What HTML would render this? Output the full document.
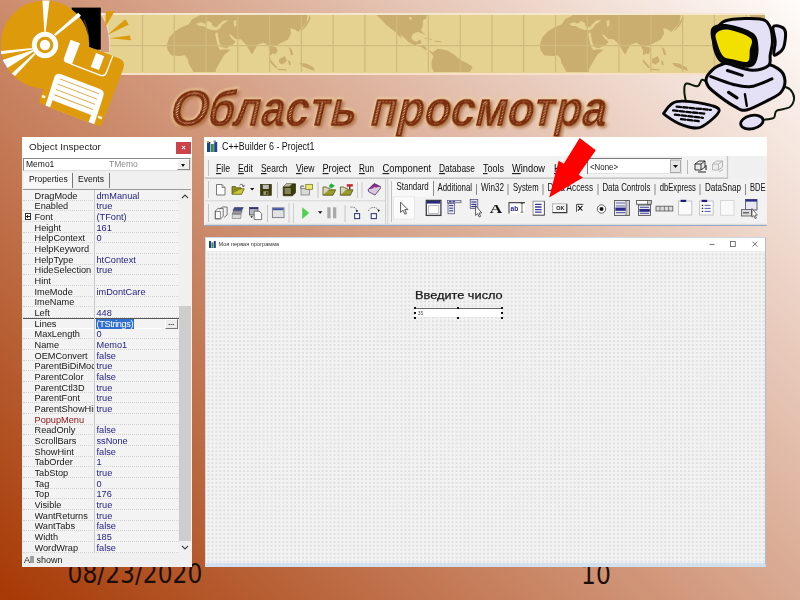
<!DOCTYPE html>
<html lang="ru">
<head>
<meta charset="utf-8">
<title>Область просмотра</title>
<style>
*{box-sizing:border-box;margin:0;padding:0}
html,body{width:800px;height:600px;overflow:hidden}
body{position:relative;font-family:"Liberation Sans",sans-serif;
background:linear-gradient(45deg,#a63904 0%,#fffcfa 100%);}
.abs{position:absolute}
#banner{left:100px;top:13.2px;width:665px;height:62.3px;background:#e5d190;border-top:2.3px solid #f5e7cd;border-bottom:2.7px solid #f8dfc8;overflow:hidden}
#title{left:0;top:60px;width:800px;height:90px}
#date,#pnum{font-family:"DejaVu Sans Condensed","DejaVu Sans","Liberation Sans",sans-serif;font-size:26px;color:#1c0f08;line-height:30px;white-space:nowrap}
#date{left:67.5px;top:559px}
#pnum{left:581px;top:560px}
/* ---------- Object inspector ---------- */
#oi{left:22px;top:137px;width:170px;height:430px;background:#f0f0f0;filter:blur(0.35px)}
#oi .tbar{left:0;top:0;width:170px;height:21px;background:#fff}
#oi .ttl{left:7px;top:4px;font-size:9.9px;color:#222;line-height:12px;white-space:nowrap}
#oi .close{left:154px;top:5px;width:15px;height:12px;background:#cc444b;color:#fff;font-size:7px;line-height:12px;text-align:center;font-weight:bold}
#oi .combo{left:1px;top:21px;width:168px;height:13px;background:#fff;border:1px solid #8a8a8a;border-right-color:#ddd;border-bottom-color:#ddd}
#oi .combo span{position:absolute;top:0;font-size:8.5px;line-height:11px;white-space:nowrap}
#oi .cbtn{right:0;top:0;width:13.5px;height:11px;background:#f0f0f0;border:1px solid #fff;border-right-color:#8a8a8a;border-bottom-color:#8a8a8a}
#oi .cbtn:after{content:"";position:absolute;left:3.2px;top:3.5px;border:2.5px solid transparent;border-top:3px solid #111;border-bottom:0}
#oi .tabs{left:0;top:34px;width:170px;height:18px}
#oi .tab{position:absolute;top:2px;height:15px;font-size:8.5px;line-height:13px;color:#111;white-space:nowrap}
#oi .list{left:1px;top:52px;width:168px;height:364px;background:#f3f3f3;border-top:1px solid #999;overflow:hidden}
#oi .row{position:absolute;left:0;width:156px;height:10.67px;font-size:9.2px;line-height:10.67px;white-space:nowrap;border-bottom:1px dotted #d2d2d2;color:#151515}
#oi .row b{position:absolute;left:11.5px;top:0.7px;font-weight:normal;width:59px;overflow:hidden}
#oi .row i{position:absolute;left:73.5px;top:0.7px;font-style:normal;color:#1c1c80}
#oi .split{left:70.5px;top:0;width:1px;height:364px;background:#c9c9c9;border-left:0}
#oi .sb{left:156px;top:0;width:12px;height:364px;background:#f0f0f0}
#oi .thumb{left:0;top:116px;width:12px;height:235px;background:#cdcdcd}
#oi .status{left:2px;top:418px;font-size:9px;line-height:11px;color:#222}
#oi .plus{position:absolute;left:1.7px;top:2px;width:6.5px;height:6.5px;border:1px solid #333;background:#fff;text-decoration:none}
#oi .plus:before{content:"";position:absolute;left:0.7px;top:1.75px;width:3.2px;height:1px;background:#222}
#oi .plus:after{content:"";position:absolute;left:1.8px;top:0.7px;width:1px;height:3.2px;background:#222}
#oi .dots{position:absolute;left:142px;top:-0.5px;width:12.5px;height:10px;background:#ececec;border:1px solid #fff;border-right-color:#777;border-bottom-color:#777;font-style:normal;font-size:7px;line-height:5px;text-align:center;color:#111;font-weight:bold}
/* ---------- IDE ---------- */
#ide{left:203.6px;top:137px;width:563.2px;height:89px;background:#f0f0f0;border-bottom:1.4px solid #93abc6;filter:blur(0.35px);overflow:hidden}
#ide .tbar{left:0;top:0;width:564px;height:18.7px;background:#fff}
#ide .ttl{left:18px;top:3px;font-size:10.5px;line-height:14px;color:#111;white-space:nowrap;letter-spacing:-0.15px}
#ide .menu{left:1px;top:20px;width:550px;height:20px;background:#f4f4f4}
#ide .menu span{position:absolute;top:3px;font-size:10px;line-height:14px;color:#111;white-space:nowrap}
#ide .menu u{text-decoration-thickness:0.6px;text-underline-offset:1px}
#ide .ptab{position:absolute;top:44px;font-size:9.3px;line-height:13px;color:#111;white-space:nowrap;letter-spacing:-0.25px}
#ide .sep{position:absolute;width:1px;background:#b5b5b5}
/* ---------- Form ---------- */
#form{left:204.5px;top:236.8px;width:561.3px;height:330.2px;background:#f0f0f0;border:1px solid #cfd8e2;border-bottom:4px solid #d2e0ef;border-right:1.4px solid #a9bdd4;filter:blur(0.3px);overflow:hidden}
#form .tbar{left:0;top:0;width:561px;height:13px;background:#fff}
#form .grid{left:0;top:13px;width:561px;height:316px;
background-color:#f2f2f2;background-image:radial-gradient(circle,#cdcdcd 0.5px,rgba(0,0,0,0) 0.9px);background-size:3.95px 3.95px;background-position:0.5px 1.5px}
#form .ttl{left:13px;top:2.6px;font-size:5.6px;line-height:8px;color:#333;white-space:nowrap}
#form .lbl{left:209px;top:51px;font-size:10.5px;line-height:12px;color:#1a1a1a;white-space:nowrap;transform-origin:0 0;transform:scaleX(1.215);-webkit-text-stroke:0.25px #1a1a1a}
#form .memo{left:209.3px;top:70.3px;width:87px;height:9px;background:#fff;border-top:1px solid #6a6a6a}
#form .h{position:absolute;width:2.2px;height:2.2px;background:#111}
</style>
</head>
<body>
<!-- BANNER -->
<div id="banner" class="abs">
<svg class="abs" style="left:0;top:0" width="665" height="57.3" viewBox="100 15.5 665 57.3">
<defs><g id="world"><g fill="#c9ae70"><path d="M200.5 15.4L192.2 19.7L188.5 25.0L181.0 28.0L174.2 32.5L169.0 38.5L166.7 46.0L167.5 50.5L171.2 55.7L179.5 56.5L184.7 55.7L187.7 59.5L188.5 64.0L192.2 70.0L193.7 73.3L215.5 73.3L216.2 69.2L220.0 62.5L224.5 55.0L230.5 50.5L226.0 49.7L220.0 50.5L217.7 46.0L216.2 40.0L215.2 34.7L216.2 32.5L217.7 34.0L219.2 42.2L221.5 47.5L226.0 48.7L232.7 45.2L235.7 42.2L232.0 39.2L229.0 35.5L230.5 34.7L235.0 39.2L241.0 40.0L246.2 45.2L250.0 52.0L252.2 55.0L254.5 50.5L257.5 45.2L263.5 43.0L268.0 46.0L270.2 51.2L271.7 55.0L273.2 53.5L272.5 47.5L280.0 43.7L280.0 15.4Z"/><path d="M270.0 15.4L307.5 15.4L306.7 22.0L305.2 25.0L300.7 29.5L298.5 32.5L294.0 29.5L290.2 28.7L291.0 34.0L288.0 40.0L283.5 42.2L279.0 44.5L276.0 45.2L270.0 43.7Z"/><path d="M309.3 15.4L310.8 19.0L306.7 26.2L301.8 31.3L300.0 32.5L304.8 25.7L308.7 19.3Z"/><path d="M270.0 47.5L276.0 47.5L277.8 51.2L275.2 55.0L272.7 53.2L271.2 55.7L270.0 55.0Z"/><path d="M288.7 47.5L291.3 49.3L293.5 55.0L291.0 55.7L289.8 51.2Z"/><path d="M279.0 59.5L285.0 56.5L286.8 61.7L282.3 64.9L279.0 63.2Z"/><path d="M270.0 59.5L274.5 64.7L277.2 68.2L275.4 68.5L270.0 62.5Z"/><path d="M277.5 69.2L286.5 69.7L286.8 70.9L277.8 70.6Z"/><path d="M288.0 61.0L290.2 61.7L290.7 65.8L288.9 65.5Z"/><path d="M299.2 63.2L306.0 64.0L313.5 67.7L315.0 71.5L309.0 69.4L301.5 66.4Z"/><path d="M376.0 15.4L427.0 15.4L426.2 19.0L423.2 20.5L422.5 26.5L421.0 31.0L423.2 33.2L426.2 35.5L422.5 34.0L418.0 32.5L413.5 34.0L411.2 37.7L412.7 40.7L416.5 42.2L420.2 40.0L421.7 43.7L419.5 44.5L415.0 44.5L419.5 46.0L424.7 46.7L427.0 49.7L425.5 50.5L421.7 47.5L413.5 45.2L408.2 42.2L403.7 37.7L400.0 34.7L402.2 39.2L398.5 36.2L395.5 32.5L389.5 28.0L385.0 24.2L381.2 19.7Z"/><path d="M424.7 38.2L432.2 39.7L432.2 40.6L424.7 39.1Z"/><path d="M434.5 41.2L441.2 41.8L441.2 42.8L434.5 42.2Z"/><path d="M427.7 50.5L433.0 52.7L437.5 49.3L442.0 49.7L448.0 51.2L454.0 55.0L460.0 60.2L469.0 64.7L472.7 67.7L470.5 71.5L467.5 73.3L434.5 73.3L431.5 67.7L431.5 61.7L433.7 56.5L430.0 52.7Z"/></g><g fill="#e5d190"><path d="M196.0 24.2L201.2 22.7L205.0 24.2L208.0 21.2L211.7 23.5L212.5 26.5L216.2 28.0L219.2 25.0L223.0 21.2L228.2 20.5L226.0 22.7L222.2 25.0L220.0 28.7L216.2 31.0L211.0 30.2L206.5 28.7L202.7 26.5L199.0 26.5Z"/><path d="M233.5 21.2L236.5 20.5L236.2 26.5L234.2 27.2Z"/><path d="M408.7 17.5L411.2 17.2L412.0 19.7L409.7 20.2Z"/></g></g></defs>
<use href="#world"/><use href="#world" x="373"/>
<path d="M142.5 14V74 M174.3 14V74 M206.0 14V74 M237.8 14V74 M269.6 14V74 M301.4 14V74 M333.1 14V74 M364.9 14V74 M396.7 14V74 M428.4 14V74 M460.2 14V74 M492.0 14V74 M523.7 14V74 M555.5 14V74 M587.3 14V74 M619.0 14V74 M650.8 14V74 M682.6 14V74 M714.4 14V74 M746.1 14V74 M100 46.2H766" stroke="#d0ba7d" stroke-width="1.25" fill="none"/>
</svg>
</div>
<!-- CD + FLOPPY CLIPART -->
<svg class="abs" style="left:0;top:0" width="140" height="135" viewBox="0 0 140 135">
<path d="M100.8 14.2C106.5 22 110 32 109.8 45L109.6 52H100.8Z" fill="#d39a82"/>
<path d="M101.2 14.2C106.8 22 110.2 33 109.7 52" fill="none" stroke="#f3e6df" stroke-width="0.9"/>
<rect x="71.7" y="7.6" width="29.1" height="42" fill="#000"/>
<path d="M84 20C88 29 89.4 38 88.6 48" fill="none" stroke="#55587a" stroke-width="1" opacity="0.8"/>
<path d="M106 11H114.8L105 27.4Z M125.3 19.2L128.8 24.5L107.2 35Z M130 35.6L131 40.2L110 38.2Z" fill="#dd9a0a"/>
<circle cx="45" cy="44.6" r="44.2" fill="#dd9a0a"/>
<g fill="#fff">
<path d="M44.4 32.2L45.6 32.2L49.5 0.6L42.4 0.6Z"/>
<path d="M54 34.2L55.5 36L81 15.7L78.2 12.8Z"/>
<path d="M32.4 48L0.9 51L1.2 54.2L32.6 49.4Z"/>
<path d="M33 50L2.6 60L7.4 68L33.6 51.4Z"/>
<path d="M34.2 53L11.8 73.4L15 76L35.4 54.2Z"/>
<circle cx="45" cy="45" r="13.2"/>
</g>
<circle cx="45" cy="45" r="8.3" fill="#dd9a0a"/><circle cx="45" cy="45" r="5.2" fill="#fff"/>
<g transform="translate(64.6 34.6) rotate(21)">
<path d="M3 2.6H59Q67 2.6 67 10.6V70Q67 73 64 73H3Q0 73 0 70V5.6Q0 2.6 3 2.6Z" fill="#dd9a0a"/>
<path d="M7.4 2.6H17.5V25.6H12Q7.4 25.6 7.8 20.6Z" fill="#fff"/>
<path d="M17 25.2H47.5Q52.6 25.2 52.6 20.1V2.6" fill="none" stroke="#fff" stroke-width="1.3"/>
<rect x="36" y="6" width="8.8" height="14.8" fill="#fff"/>
<path d="M11 38.2H52.5Q58 38.2 58.2 43.7L59.8 73H7.6L5.6 43.7Q5.6 38.2 11 38.2Z" fill="#fff"/>
<rect x="12.4" y="65.6" width="41.2" height="7.6" fill="#dd9a0a"/>
<path d="M11.4 43H53.6 M11.5 48.6H53.4 M11.6 54.2H53.4 M12 59.8H53.4" stroke="#d9a038" stroke-width="0.9"/>
<rect x="0.8" y="64.2" width="3.6" height="2.6" fill="#fff3d6"/><rect x="60.8" y="63.4" width="4" height="2.6" fill="#fff3d6"/>
</g>
</svg>
<!-- COMPUTER CLIPART -->
<svg class="abs" style="left:650px;top:0" width="150" height="140" viewBox="650 0 150 140" stroke-linecap="round" stroke-linejoin="round">
<path d="M707.6 82.8C706.7 82.3 703.7 79.2 702.0 79.8C700.3 80.4 700.3 85.6 697.6 86.3C695.0 86.9 688.5 82.7 686.3 83.5C684.0 84.2 684.4 88.1 684.3 90.8C684.2 93.5 685.3 98.4 685.6 99.9" fill="none" stroke="#0c1a08" stroke-width="2"/>
<path d="M762.9 119.9C764.7 119.5 771.5 119.3 773.8 117.8C776.0 116.2 773.9 112.5 776.6 110.8C779.2 109.0 786.6 109.3 789.5 107.3C792.4 105.2 793.9 101.4 794.1 98.5C794.2 95.6 792.3 91.8 790.6 89.8C788.8 87.7 784.7 86.8 783.6 86.3" fill="none" stroke="#0c1a08" stroke-width="2"/>
<path d="M773.1 27.0C774.1 24.6 779.2 25.9 781.2 26.8C783.3 27.6 785.1 28.8 785.5 32.2C785.9 35.8 785.0 44.0 783.5 47.8C782.0 51.5 778.1 53.5 776.5 54.5C774.9 55.5 774.0 55.7 773.8 53.5C773.5 51.3 775.4 45.7 775.2 41.2C775.1 36.8 772.1 29.4 773.1 27.0Z" fill="#e4e1f7" stroke="#060606" stroke-width="3"/>
<path d="M707.6 75.4C709.5 72.7 713.4 68.4 717.8 66.1C722.1 63.9 725.6 62.2 733.5 61.8C741.4 61.3 757.2 62.0 765.0 63.5C772.8 65.0 777.1 67.6 780.4 70.5C783.7 73.4 784.8 77.4 785.0 81.0C785.1 84.6 783.3 89.3 781.1 92.2C778.9 95.1 777.6 95.2 772.0 98.2C766.4 101.1 753.6 108.2 747.5 109.7C741.4 111.2 741.1 110.1 735.3 106.9C729.4 103.7 717.0 94.5 712.2 90.5C707.3 86.4 707.1 84.9 706.4 82.4C705.6 79.9 705.7 78.1 707.6 75.4Z" fill="#e4e1f7" stroke="#060606" stroke-width="3"/>
<path d="M710.8 76.6C714.5 77.9 726.8 82.8 733.5 84.5C740.2 86.2 744.6 87.5 751.0 86.6C757.4 85.7 768.5 80.2 772.0 78.9" fill="none" stroke="#060606" stroke-width="3"/>
<path d="M727.4 70.5L742.3 75.4" stroke="#060606" stroke-width="3"/><path d="M728.6 92.4L737.0 97.8" stroke="#060606" stroke-width="3.2"/><path d="M744.9 94.1L746.8 105.9" stroke="#060606" stroke-width="2.4"/>
<path d="M718.8 26.2C721.5 22.2 723.1 21.0 730.0 19.8C736.9 18.5 753.4 18.0 760.0 19.0C766.6 20.0 767.3 21.9 769.4 25.6C771.5 29.3 772.4 36.4 772.5 41.2C772.6 46.1 770.9 50.9 770.2 55.0C769.6 59.1 771.5 63.1 768.5 65.6C765.5 68.2 758.5 70.4 752.5 70.2C746.5 70.1 737.9 66.7 732.5 65.0C727.1 63.3 723.1 63.5 720.0 60.0C716.9 56.5 714.0 49.4 713.8 43.8C713.5 38.1 716.0 30.2 718.8 26.2Z" fill="#e4e1f7" stroke="#060606" stroke-width="3"/>
<path d="M712.2 27.2C715.0 24.3 721.9 23.5 728.8 24.5C735.6 25.5 748.2 29.3 753.1 33.1C758.1 37.0 758.1 42.5 758.5 47.5C758.9 52.5 757.6 59.8 755.8 63.1C753.9 66.5 751.2 67.6 747.5 67.8C743.8 67.9 738.2 65.7 733.8 64.2C729.3 62.8 724.6 62.9 721.0 59.2C717.4 55.6 713.7 47.6 712.2 42.2C710.8 36.9 709.5 30.2 712.2 27.2Z" fill="#060606"/>
<path d="M716.9 32.8C718.9 30.9 723.1 28.8 728.8 29.8C734.4 30.7 747.1 34.9 750.6 38.2C754.1 41.6 750.2 46.1 749.8 50.0C749.3 53.9 750.4 59.9 747.8 61.5C745.1 63.1 737.9 60.4 733.8 59.5C729.6 58.6 725.9 59.1 723.0 56.0C720.1 52.9 717.5 44.5 716.5 40.6C715.5 36.8 714.8 34.6 716.9 32.8Z" fill="#f1e000"/>
<path d="M664.9 111.6C666.7 109.4 670.0 103.0 676.6 101.7C683.2 100.3 697.5 102.2 704.6 103.8C711.7 105.3 719.8 106.8 719.2 110.8C718.5 114.7 706.7 124.8 700.6 127.2C694.5 129.6 688.6 127.1 682.8 125.1C676.9 123.1 668.6 117.5 665.6 115.3C662.6 113.1 663.1 113.9 664.9 111.6Z" fill="#e4e1f7" stroke="#060606" stroke-width="2.8"/>
<path d="M676.6 106.6L710.8 109.9 M673.1 110.4L706.4 113.9 M674.9 114.6L702.9 117.8 M681.0 119.2L699.4 121.3" stroke="#060606" stroke-width="2.3" stroke-dasharray="4.5 2.2"/>
<ellipse cx="751.9" cy="122.1" rx="11.4" ry="6.6" fill="#e4e1f7" stroke="#060606" stroke-width="2.8" transform="rotate(-12 751.9 122.1)"/>
</svg>
<!-- TITLE -->
<svg id="title" class="abs" viewBox="0 60 800 90">
<defs>
<pattern id="hatch" width="2.2" height="2.2" patternUnits="userSpaceOnUse" patternTransform="rotate(-40)">
<rect width="2.2" height="2.2" fill="#e2bc94"/><rect width="2.2" height="1.4" fill="#8a3a12"/>
</pattern>
<filter id="tsh" x="-5%" y="-40%" width="110%" height="180%"><feGaussianBlur stdDeviation="1.5"/></filter>
<filter id="tgl" x="-5%" y="-40%" width="110%" height="180%"><feGaussianBlur stdDeviation="1.8"/></filter>
<filter id="ero1" x="-2%" y="-10%" width="104%" height="120%"><feMorphology in="SourceAlpha" operator="erode" radius="0.3" result="e"/><feComposite in="SourceGraphic" in2="e" operator="in"/></filter>
<filter id="ero" x="-2%" y="-10%" width="104%" height="120%"><feMorphology in="SourceAlpha" operator="erode" radius="1.55" result="e"/><feComposite in="SourceGraphic" in2="e" operator="in"/></filter>
</defs>
<g font-family="'Liberation Sans',sans-serif" font-weight="bold" font-size="51" transform="translate(0 125.5) skewX(-13) translate(0 -125.5)">
<g fill="#f4d79c" stroke="#f4d79c" stroke-width="2.6" opacity="0.85" filter="url(#tgl)"><text x="167.5" y="125.5" textLength="39.5" lengthAdjust="spacingAndGlyphs">О</text><text x="205.5" y="125.5" textLength="148.5" lengthAdjust="spacingAndGlyphs">бласть</text><text x="368" y="125.5" textLength="236" lengthAdjust="spacingAndGlyphs">просмотра</text></g>
<g fill="#8a4418" opacity="0.6" filter="url(#tsh)"><text x="170.0" y="128.0" textLength="39.5" lengthAdjust="spacingAndGlyphs">О</text><text x="208.0" y="128.0" textLength="148.5" lengthAdjust="spacingAndGlyphs">бласть</text><text x="370.5" y="128.0" textLength="236" lengthAdjust="spacingAndGlyphs">просмотра</text></g>
<g fill="#7a2b09" filter="url(#ero1)"><text x="167.5" y="125.5" textLength="39.5" lengthAdjust="spacingAndGlyphs">О</text><text x="205.5" y="125.5" textLength="148.5" lengthAdjust="spacingAndGlyphs">бласть</text><text x="368" y="125.5" textLength="236" lengthAdjust="spacingAndGlyphs">просмотра</text></g>
<g fill="url(#hatch)" filter="url(#ero)"><text x="167.5" y="125.5" textLength="39.5" lengthAdjust="spacingAndGlyphs">О</text><text x="205.5" y="125.5" textLength="148.5" lengthAdjust="spacingAndGlyphs">бласть</text><text x="368" y="125.5" textLength="236" lengthAdjust="spacingAndGlyphs">просмотра</text></g>
</g>
</svg>
<!-- DATE / PAGE -->
<div id="date" class="abs">08/23/2020</div>
<div id="pnum" class="abs">10</div>
<!-- OBJECT INSPECTOR -->
<div id="oi" class="abs">
<div class="abs tbar"><div class="abs ttl">Object Inspector</div><div class="abs close">×</div></div>
<div class="abs combo"><span style="left:2px;color:#111">Memo1</span><span style="left:85px;color:#8a8a8a">TMemo</span><div class="abs cbtn"></div></div>
<div class="abs tabs"><div class="tab" style="left:2px;width:49px;padding-left:5px;background:#f7f7f7;border-right:1px solid #777">Properties</div><div class="tab" style="left:56px;width:32px;border-right:1px solid #777">Events</div></div>
<div class="abs list">
<div class="row" style="top:0.00px"><b>DragMode</b><i>dmManual</i></div>
<div class="row" style="top:10.67px"><b>Enabled</b><i>true</i></div>
<div class="row" style="top:21.34px"><s class="plus"></s><b>Font</b><i>(TFont)</i></div>
<div class="row" style="top:32.01px"><b>Height</b><i>161</i></div>
<div class="row" style="top:42.68px"><b>HelpContext</b><i>0</i></div>
<div class="row" style="top:53.35px"><b>HelpKeyword</b><i></i></div>
<div class="row" style="top:64.02px"><b>HelpType</b><i>htContext</i></div>
<div class="row" style="top:74.69px"><b>HideSelection</b><i>true</i></div>
<div class="row" style="top:85.36px"><b>Hint</b><i></i></div>
<div class="row" style="top:96.03px"><b>ImeMode</b><i>imDontCare</i></div>
<div class="row" style="top:106.70px"><b>ImeName</b><i></i></div>
<div class="row" style="top:117.37px"><b>Left</b><i>448</i></div>
<div class="row" style="top:128.04px;border-top:1px solid #555;border-bottom:1px solid #fff;background:#f3f3f3"><b style="top:-0.3px">Lines</b><i style="top:-0.3px;left:72.5px;background:#2f6fd0;color:#fff;padding:0 1px;letter-spacing:-0.35px">(TStrings)</i><em class="dots">...</em></div>
<div class="row" style="top:138.71px"><b>MaxLength</b><i>0</i></div>
<div class="row" style="top:149.38px"><b>Name</b><i>Memo1</i></div>
<div class="row" style="top:160.05px"><b>OEMConvert</b><i>false</i></div>
<div class="row" style="top:170.72px"><b>ParentBiDiMode</b><i>true</i></div>
<div class="row" style="top:181.39px"><b>ParentColor</b><i>false</i></div>
<div class="row" style="top:192.06px"><b>ParentCtl3D</b><i>true</i></div>
<div class="row" style="top:202.73px"><b>ParentFont</b><i>true</i></div>
<div class="row" style="top:213.40px"><b>ParentShowHint</b><i>true</i></div>
<div class="row" style="top:224.07px"><b style="color:#8a1010">PopupMenu</b><i></i></div>
<div class="row" style="top:234.74px"><b>ReadOnly</b><i>false</i></div>
<div class="row" style="top:245.41px"><b>ScrollBars</b><i>ssNone</i></div>
<div class="row" style="top:256.08px"><b>ShowHint</b><i>false</i></div>
<div class="row" style="top:266.75px"><b>TabOrder</b><i>1</i></div>
<div class="row" style="top:277.42px"><b>TabStop</b><i>true</i></div>
<div class="row" style="top:288.09px"><b>Tag</b><i>0</i></div>
<div class="row" style="top:298.76px"><b>Top</b><i>176</i></div>
<div class="row" style="top:309.43px"><b>Visible</b><i>true</i></div>
<div class="row" style="top:320.10px"><b>WantReturns</b><i>true</i></div>
<div class="row" style="top:330.77px"><b>WantTabs</b><i>false</i></div>
<div class="row" style="top:341.44px"><b>Width</b><i>185</i></div>
<div class="row" style="top:352.11px"><b>WordWrap</b><i>false</i></div>
<div class="abs split"></div>
<div class="abs sb"><div class="abs thumb"></div><svg class="abs" style="left:2px;top:4px" width="8" height="5" viewBox="0 0 8 5"><path d="M1 4 L4 1 L7 4" fill="none" stroke="#444" stroke-width="1.1"/></svg><svg class="abs" style="left:2px;top:355px" width="8" height="5" viewBox="0 0 8 5"><path d="M1 1 L4 4 L7 1" fill="none" stroke="#444" stroke-width="1.1"/></svg></div>
</div>
<div class="abs status">All shown</div>
</div>
<!-- IDE MAIN WINDOW -->
<div id="ide" class="abs">
<div class="abs tbar"></div>
<div class="abs" style="left:0;top:18.7px;width:524px;height:22.3px;background:#f2f2f2;border-bottom:1px solid #d8d8d8"></div>
<div class="abs" style="left:0;top:41px;width:181px;height:48px;background:#f1f1f1"></div>
<div class="abs" style="left:181px;top:41px;width:381px;height:48px;background:#f2f2f2"></div>
<svg class="abs" style="left:0;top:0" width="562" height="89" viewBox="204 137 562 89" font-family="'Liberation Sans',sans-serif">
<!-- app icon -->
<g><rect x="207" y="142" width="3.3" height="10" fill="#1f3f8f"/><rect x="210.8" y="144" width="3" height="8" fill="#3b8a4a"/><rect x="214.2" y="142" width="3" height="10" fill="#1f3f8f"/><rect x="207" y="141" width="2" height="2" fill="#caa23a"/><rect x="213.5" y="140.5" width="2.5" height="2" fill="#6f8fcf"/></g>
<text x="222" y="149.8" font-size="10.4" fill="#111" textLength="92.5" lengthAdjust="spacingAndGlyphs">C++Builder 6 - Project1</text>
<!-- menu -->
<g font-size="10.4" fill="#0c0c0c">
<text x="216" y="172.1" textLength="14" lengthAdjust="spacingAndGlyphs"><tspan text-decoration="underline">F</tspan>ile</text>
<text x="238" y="172.1" textLength="15" lengthAdjust="spacingAndGlyphs"><tspan text-decoration="underline">E</tspan>dit</text>
<text x="261" y="172.1" textLength="26.5" lengthAdjust="spacingAndGlyphs"><tspan text-decoration="underline">S</tspan>earch</text>
<text x="296" y="172.1" textLength="18.5" lengthAdjust="spacingAndGlyphs"><tspan text-decoration="underline">V</tspan>iew</text>
<text x="322.5" y="172.1" textLength="28.5" lengthAdjust="spacingAndGlyphs"><tspan text-decoration="underline">P</tspan>roject</text>
<text x="359" y="172.1" textLength="15" lengthAdjust="spacingAndGlyphs"><tspan text-decoration="underline">R</tspan>un</text>
<text x="382.5" y="172.1" textLength="48.5" lengthAdjust="spacingAndGlyphs"><tspan text-decoration="underline">C</tspan>omponent</text>
<text x="439" y="172.1" textLength="36" lengthAdjust="spacingAndGlyphs"><tspan text-decoration="underline">D</tspan>atabase</text>
<text x="483" y="172.1" textLength="21" lengthAdjust="spacingAndGlyphs"><tspan text-decoration="underline">T</tspan>ools</text>
<text x="512" y="172.1" textLength="33" lengthAdjust="spacingAndGlyphs"><tspan text-decoration="underline">W</tspan>indow</text>
<text x="554" y="172.1" textLength="19" lengthAdjust="spacingAndGlyphs"><tspan text-decoration="underline">H</tspan>elp</text>
</g>
<!-- panel borders -->
<path d="M205 178.5H727.5V156" fill="none" stroke="#c4c4c4" stroke-width="1.2"/>
<path d="M205 200.8H385 M205 224.3H766" fill="none" stroke="#d5d5d5" stroke-width="1"/>
<path d="M385.5 179V224 M387.8 179V224" fill="none" stroke="#cfcfcf" stroke-width="1"/>
<path d="M208.5 160V176 M208.5 181V198 M208.5 204V222 M391.5 181V222" fill="none" stroke="#c2c2c2" stroke-width="1"/>
<!-- combo none -->
<rect x="587.5" y="158.5" width="94" height="15" fill="#fff" stroke="#7a7a7a" stroke-width="1"/>
<path d="M588 173.5H681.5V159" fill="none" stroke="#e2e2e2" stroke-width="1"/>
<text x="590" y="169.5" font-size="9.6" fill="#222" textLength="28" lengthAdjust="spacingAndGlyphs">&lt;None&gt;</text>
<rect x="670.5" y="160" width="10" height="12.5" fill="#e6e6e6" stroke="#8a8a8a" stroke-width="0.7"/>
<path d="M673 165h5l-2.5 3z" fill="#111"/>
<path d="M687.5 160V174" stroke="#b9b9b9" stroke-width="1"/>
<!-- two small icons right of combo -->
<g stroke="#222" stroke-width="0.9" fill="#e9e9e9"><path d="M695 164l4-3h6v6l-4 3h-6z"/><path d="M695 164h6v6 M701 164l4-3" fill="none"/><path d="M698 172h8 M706 165v5" fill="none" stroke-width="1.1"/></g>
<g stroke="#b0b0b0" stroke-width="0.9" fill="#ececec"><path d="M712.5 164l4-3h6v6l-4 3h-6z"/><path d="M712.5 164h6v6 M718.5 164l4-3" fill="none"/><path d="M719 172l4-2.5" fill="none"/></g>
<!-- toolbar row 1 -->
<g>
<path d="M216.5 184.5h5.5l3 3v7.5h-8.5z" fill="#fff" stroke="#6a6a6a" stroke-width="0.9"/><path d="M222 184.5v3h3" fill="none" stroke="#6a6a6a" stroke-width="0.8"/>
<path d="M232 194.3l2.2-5.5h10l-2.6 5.5z" fill="#c9c93a" stroke="#5e5e10" stroke-width="0.8"/><path d="M232 194v-7.5h3.5l1 1.2h4.5v1.3" fill="#8c8c1e" stroke="#5e5e10" stroke-width="0.8"/><path d="M239.5 185.5c1-1.6 2.8-1.6 3.6 0l-.9.2 1.6 1.2.4-2" fill="none" stroke="#333" stroke-width="0.7"/>
<path d="M250 188h4.4l-2.2 2.6z" fill="#111"/>
<rect x="260.5" y="184.3" width="10.8" height="11" fill="#3c3c06" stroke="#26260a" stroke-width="0.6"/><rect x="262.8" y="184.8" width="6" height="4.2" fill="#bdbdbd"/><rect x="263.4" y="191.2" width="5" height="3.6" fill="#9a9a7a"/><rect x="266.2" y="191.8" width="1.4" height="2.6" fill="#2a2a06"/>
<path d="M277.5 182V198" stroke="#c4c4c4"/>
<path d="M283.2 186.8l3-3h9.3v9l-3 3h-9.3z" fill="#3a3a0a" stroke="#1e1e06" stroke-width="0.6"/><rect x="284.6" y="188" width="6.2" height="6" fill="#84845a"/><path d="M286.2 183.8h6l-2.8 2.8h-6z" fill="#b9b9a0"/>
<rect x="301" y="188.5" width="8.5" height="6.5" fill="#d9d9d9" stroke="#6e6e6e" stroke-width="0.7"/><rect x="305.8" y="184.3" width="6.6" height="5.2" fill="#e9e96a" stroke="#6a6a1e" stroke-width="0.7"/><path d="M300.8 188.5v-2.4h3.4" fill="none" stroke="#333" stroke-width="0.8"/>
<path d="M318 182V198" stroke="#c4c4c4"/>
<path d="M323 195.2l2.2-5.4h10.4l-2.6 5.4z" fill="#9c9c2a" stroke="#4e4e10" stroke-width="0.8"/><path d="M323 195v-8h3.5l1 1.2h3" fill="#d6d6c0" stroke="#55551a" stroke-width="0.8"/><path d="M331.2 183.2l3.6 2.6-3.6 2.8-2.4-2.7z" fill="#22b43a"/>
<path d="M340.4 195.2l2.2-5.4h10.4l-2.6 5.4z" fill="#9c9c2a" stroke="#4e4e10" stroke-width="0.8"/><path d="M340.4 195v-8h3.5l1 1.2h3" fill="#d6d6c0" stroke="#55551a" stroke-width="0.8"/><rect x="346.8" y="184.2" width="6" height="2.4" fill="#c8202a"/><rect x="349" y="186.4" width="1.4" height="3" fill="#7a1a1a"/>
<path d="M357.5 182V198 M362 182V198" stroke="#c9c9c9"/>
<path d="M368.2 189.5l6-6 6 3-5.6 7z" fill="#8a2a9a" stroke="#3e104a" stroke-width="0.7"/><path d="M368.2 189.5l.4 2.2 6.4 3.4 5.4-6.8-.2-1.8" fill="#d8c8e0" stroke="#3e104a" stroke-width="0.7"/><path d="M373.5 187.2l2.2 1" stroke="#f2d24a" stroke-width="1"/>
</g>
<!-- toolbar row 2 -->
<g>
<path d="M215.2 211l3-2.6h5v8l-3 2.6h-5z M219.5 209.2l3-2.2h4.6v8l-3 2.4" fill="#f4f4f4" stroke="#555" stroke-width="0.8"/><rect x="215.6" y="211.3" width="4.6" height="7.2" fill="#fff" stroke="#444" stroke-width="0.6"/>
<path d="M234.5 207.5h8.8l-1.6 3h-8.8z" fill="#3a4a8a" stroke="#2a2a4a" stroke-width="0.5"/><path d="M233.5 211h8.8l-1.4 3h-8.8z" fill="#9a9aa8" stroke="#50505a" stroke-width="0.5"/><path d="M232.4 214.5h8.8l-.6 4h-8.4z" fill="#d9d9d9" stroke="#606060" stroke-width="0.5"/>
<rect x="249.4" y="207.4" width="8.6" height="7.6" fill="#b7b7bf" stroke="#3a3a4a" stroke-width="0.7"/><rect x="249.4" y="207.4" width="8.6" height="1.7" fill="#34346a"/><path d="M254.2 211.2h5l2.4 2.4v6h-7.4z" fill="#fff" stroke="#444" stroke-width="0.7"/><path d="M250.4 216.2l1.3 1.8 1.3-1.8" fill="#111"/>
<path d="M267.5 205V222" stroke="#c4c4c4"/>
<rect x="272.4" y="207.8" width="11.6" height="9.8" fill="#e2e2e2" stroke="#77778a" stroke-width="0.9"/><rect x="272.9" y="208.2" width="10.6" height="2" fill="#3f4f9f"/>
<path d="M289 203V223 M293.5 203V223" stroke="#cdcdcd"/>
<path d="M302.2 207.3v11.6l7-5.8z" fill="#52d052"/>
<path d="M318 211.2h4.4l-2.2 2.6z" fill="#111"/>
<rect x="327.3" y="207.3" width="3.3" height="11" fill="#a9a9a9"/><rect x="333" y="207.3" width="3.3" height="11" fill="#a9a9a9"/>
<path d="M345 205V222" stroke="#c4c4c4"/>
<path d="M350.5 207.2c3.6-.6 6 .8 6.4 3.8" fill="none" stroke="#333" stroke-width="0.7" stroke-dasharray="1 0.8"/><path d="M355.6 210.2l1.3 2.2 1.3-2.2z" fill="#111"/><rect x="354.6" y="213.6" width="5" height="5" fill="#fff" stroke="#3a3a8a" stroke-width="1.1"/>
<path d="M368.5 211c1.4-4.6 8-4.8 10 -.6" fill="none" stroke="#333" stroke-width="0.7" stroke-dasharray="1 0.8"/><path d="M377.4 209.6l2.6.4-1.6 2z" fill="#111"/><rect x="371.2" y="213.6" width="5.2" height="5" fill="#fff" stroke="#3a3a8a" stroke-width="1.1"/>
</g>
<!-- palette tabs -->
<rect x="392.5" y="180.5" width="40.5" height="16" fill="#f8f8f8"/>
<path d="M433.5 181V196 M476.5 184V195 M508 184V195 M543 184V195 M598 184V195 M655 184V195 M700 184V195 M745.5 184V195" stroke="#7d7d7d" stroke-width="0.9" fill="none"/>
<g font-size="10.2" fill="#111">
<text x="396.5" y="190.2" textLength="32.2" lengthAdjust="spacingAndGlyphs">Standard</text>
<text x="437.5" y="191" textLength="34.5" lengthAdjust="spacingAndGlyphs">Additional</text>
<text x="481" y="191" textLength="23" lengthAdjust="spacingAndGlyphs">Win32</text>
<text x="513" y="191" textLength="25.5" lengthAdjust="spacingAndGlyphs">System</text>
<text x="547.5" y="191" textLength="45.5" lengthAdjust="spacingAndGlyphs">Data Access</text>
<text x="602.4" y="191" textLength="48" lengthAdjust="spacingAndGlyphs">Data Controls</text>
<text x="659.8" y="191" textLength="36" lengthAdjust="spacingAndGlyphs">dbExpress</text>
<text x="705" y="191" textLength="36" lengthAdjust="spacingAndGlyphs">DataSnap</text>
<text x="750" y="191" textLength="15.5" lengthAdjust="spacingAndGlyphs">BDE</text>
</g>
<!-- palette components -->
<g>
<rect x="393.5" y="196.8" width="21" height="22.4" fill="#fbfbfb" stroke="#e4e4e4" stroke-width="0.8"/>
<path d="M400.6 202.2v10.2l2.4-2.2 1.9 4 1.6-.8-1.8-3.8h3.2z" fill="#fff" stroke="#444" stroke-width="0.9"/>
<rect x="426.3" y="200.4" width="14.6" height="15" fill="#fff" stroke="#3c3c44" stroke-width="1.3"/><rect x="427" y="201" width="13.2" height="2.6" fill="#2a2a7a"/><path d="M428.6 205.6h10.2v8h-10.2z" fill="none" stroke="#9a9a9a" stroke-width="0.7"/>
<rect x="447.6" y="200.3" width="13.4" height="2.5" fill="#dedee8" stroke="#44446a" stroke-width="0.6"/><rect x="448" y="203.4" width="6.4" height="10.4" fill="#eaeaf2" stroke="#44446a" stroke-width="0.7"/><path d="M449.2 205.6h4 M449.2 208.2h4 M449.2 210.8h4 M449 201.6h2.4 M452.6 201.6h2.4" stroke="#2a2a8a" stroke-width="1"/>
<rect x="470.2" y="199.6" width="7.6" height="8.8" fill="#dcdcea" stroke="#44446a" stroke-width="0.7"/><path d="M471.4 202h5 M471.4 204.4h5 M471.4 206.6h5" stroke="#2a2a8a" stroke-width="1"/><path d="M475.6 205.6v9.8l2-1.8 1.6 3.4 1.4-.7-1.6-3.3h2.8z" fill="#fff" stroke="#333" stroke-width="0.8"/>
<text x="489.8" y="212.6" font-family="'Liberation Serif',serif" font-size="13.4" font-weight="bold" fill="#111" textLength="12.4" lengthAdjust="spacingAndGlyphs">A</text>
<rect x="509" y="202.6" width="16" height="11" fill="#fff"/><path d="M509 213.6V202.6H525" fill="none" stroke="#4a4a4a" stroke-width="1.1"/><text x="510.6" y="210.8" font-size="6.6" font-weight="bold" fill="#26269a">ab</text><path d="M520.6 203.6h2.8 M522 203.6v8.6 M520.6 212.2h2.8" stroke="#333" stroke-width="0.7" fill="none"/>
<rect x="533" y="201.2" width="11.4" height="14" fill="#fff" stroke="#8a8a8a" stroke-width="0.9"/><path d="M533 215.2h11.4v-14" fill="none" stroke="#555" stroke-width="0.9"/><path d="M535 204.4h6.6 M535 207h6.6 M535 209.6h6.6 M535 212.2h6.6" stroke="#3a3aa0" stroke-width="1.3"/>
<rect x="552.4" y="203.8" width="14.4" height="8.8" fill="#f4f4f4" stroke="#a8a8a8" stroke-width="0.8"/><path d="M552.6 212.6h14.2v-8.6" fill="none" stroke="#3a3a3a" stroke-width="1.1"/><text x="556.2" y="210.4" font-size="5.4" fill="#222" font-weight="bold">OK</text>
<rect x="576.6" y="204.4" width="6.8" height="7.4" fill="#fff"/><path d="M576.6 211.8v-7.4h6.8" fill="none" stroke="#444" stroke-width="1"/><path d="M578 205.8l4.4 4.8 M582.4 205.8l-4.4 4.8" stroke="#111" stroke-width="1.1"/>
<circle cx="601.5" cy="209" r="4.2" fill="#fff" stroke="#666" stroke-width="1"/><circle cx="601.5" cy="209" r="2" fill="#111"/>
<rect x="614.6" y="200.6" width="15" height="14.8" fill="#e8e8f0" stroke="#444" stroke-width="0.8"/><rect x="626" y="200.6" width="3.6" height="14.8" fill="#cfcfcf" stroke="#444" stroke-width="0.6"/><path d="M616 203h9 M616 206h9 M616 212.6h9" stroke="#6a6aa8" stroke-width="1.2"/><rect x="615.4" y="207.6" width="10.2" height="3.2" fill="#2a2a8a"/>
<rect x="636.6" y="200.6" width="14.6" height="3.6" fill="#fff" stroke="#444" stroke-width="0.8"/><rect x="647.4" y="200.6" width="3.8" height="3.6" fill="#cfcfcf" stroke="#444" stroke-width="0.6"/><rect x="638.6" y="205" width="12" height="10.4" fill="#e8e8f0" stroke="#444" stroke-width="0.8"/><path d="M640 207.4h9 M640 213.4h9" stroke="#6a6aa8" stroke-width="1.2"/><rect x="639.4" y="209" width="10.4" height="2.8" fill="#2a2a8a"/>
<rect x="656" y="206.2" width="16.8" height="4.8" fill="#dcdcdc" stroke="#555" stroke-width="0.8"/><path d="M660 206.2v4.8 M664.4 206.2v4.8 M668.6 206.2v4.8" stroke="#555" stroke-width="0.7"/>
<rect x="678.6" y="201" width="13.2" height="14" fill="#fafafa" stroke="#b9b9b9" stroke-width="0.8"/><rect x="680.6" y="199.8" width="5.6" height="2.2" fill="#1e1e7a"/>
<rect x="699.6" y="201" width="13.6" height="14" fill="#fafafa" stroke="#b9b9b9" stroke-width="0.8"/><rect x="701.6" y="199.8" width="5.6" height="2.2" fill="#1e1e7a"/><path d="M704.6 205.4h6 M704.6 208.4h6 M704.6 211.4h6" stroke="#5a5aa8" stroke-width="1"/><path d="M701.8 205.4h1.4 M701.8 208.4h1.4 M701.8 211.4h1.4" stroke="#333" stroke-width="1.2"/>
<rect x="720.4" y="200.6" width="13.6" height="14.6" fill="#f9f9f9" stroke="#cfcfcf" stroke-width="0.8"/>
<rect x="745.6" y="199.4" width="11.4" height="10.6" fill="#e8e8f2" stroke="#44446a" stroke-width="0.8"/><rect x="745.6" y="199.4" width="11.4" height="2.2" fill="#2a2a8a"/><rect x="741.6" y="209.6" width="10" height="6.4" fill="#d9d9d9" stroke="#555" stroke-width="0.8"/><path d="M743 212.8h6" stroke="#333" stroke-width="1"/><path d="M752 208.6v8.6l1.8-1.6 1.4 3 1.2-.6-1.4-2.9h2.4z" fill="#fff" stroke="#333" stroke-width="0.7"/>
</g>
</svg>
</div>
<!-- FORM WINDOW -->
<div id="form" class="abs">
<div class="abs tbar"></div>
<div class="abs grid"></div>
<svg class="abs" style="left:3.5px;top:2.5px" width="7" height="8" viewBox="0 0 7 8"><rect x="0" y="1" width="2" height="7" fill="#1f3f8f"/><rect x="2.4" y="2.4" width="2" height="5.6" fill="#3b8a4a"/><rect x="4.8" y="1" width="2" height="7" fill="#1f3f8f"/></svg>
<div class="abs ttl">Моя первая программа</div>
<svg class="abs" style="left:495px;top:-1px" width="66" height="14" viewBox="0 0 66 14"><path d="M8.5 7.5h5" stroke="#555" stroke-width="0.8"/><rect x="29.5" y="4.6" width="4.8" height="4.8" fill="none" stroke="#555" stroke-width="0.8"/><path d="M51.4 4.6l5 5M56.4 4.6l-5 5" stroke="#555" stroke-width="0.8"/></svg>
<div class="abs lbl">Введите число</div>
<div class="abs memo"><span style="position:absolute;left:3px;top:0.5px;font-size:5px;line-height:7px;color:#555">35</span></div>
<div class="h" style="left:208px;top:69px"></div><div class="h" style="left:251.7px;top:69px"></div><div class="h" style="left:295px;top:69px"></div>
<div class="h" style="left:208px;top:74px"></div><div class="h" style="left:295px;top:74px"></div>
<div class="h" style="left:208px;top:79.2px"></div><div class="h" style="left:251.7px;top:79.2px"></div><div class="h" style="left:295px;top:79.2px"></div>
</div>
<!-- RED ARROW -->
<svg class="abs" style="left:540px;top:130px" width="70" height="75" viewBox="540 130 70 75"><path d="M549.2 197.5L558.7 160.8L563.8 163.8L579.7 138L595.8 150.3L578.6 174.8L583 177.6Z" fill="#fe0000"/></svg>
</body>
</html>
